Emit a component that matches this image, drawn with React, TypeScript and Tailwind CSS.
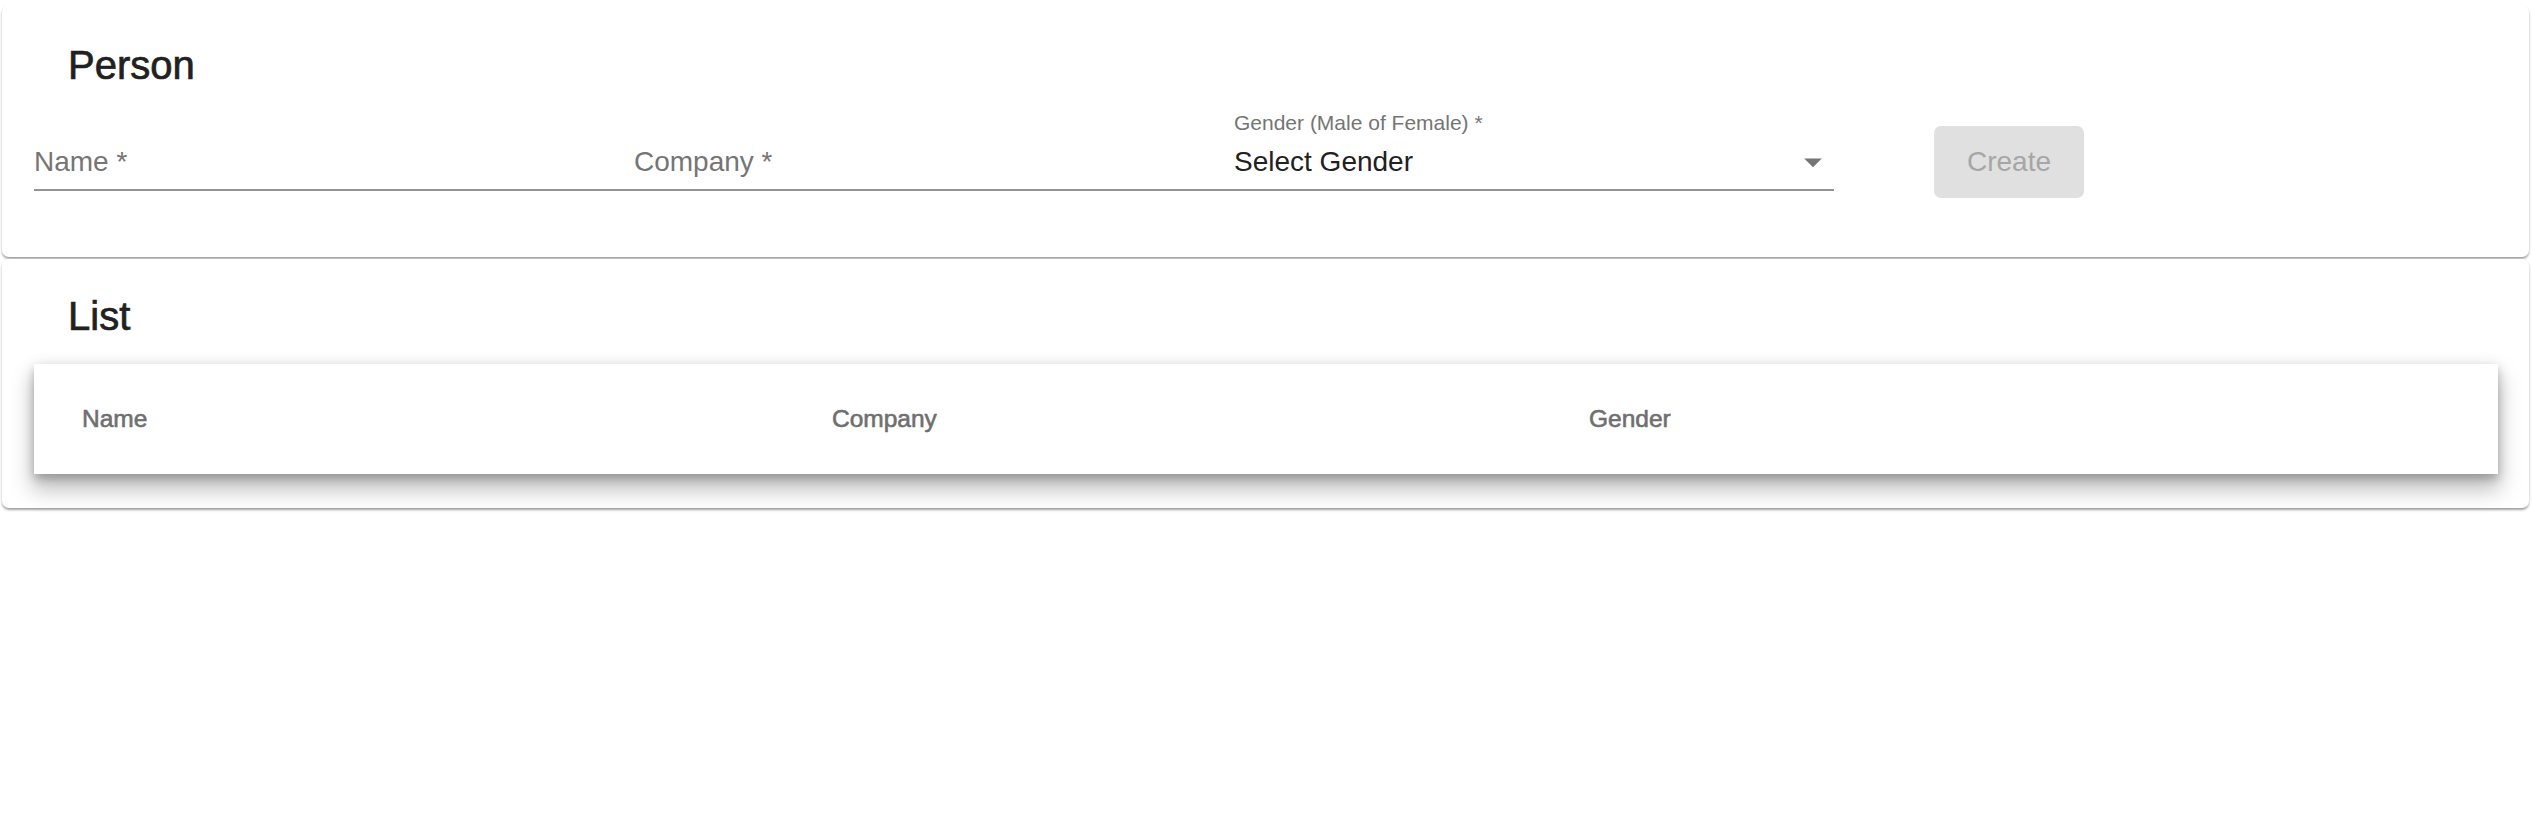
import React from 'react';

const cardShadow =
  'shadow-[0_2px_3px_0_rgba(0,0,0,0.2),0_2px_2px_0_rgba(0,0,0,0.14),0_3px_2px_-2px_rgba(0,0,0,0.12)]';

function ArrowDropDown() {
  return (
    <svg viewBox="0 0 24 24" className="w-[42px] h-[42px] fill-[#757575]">
      <path d="M7 10l5 5 5-5z" />
    </svg>
  );
}

function TextField({ label }: { label: string }) {
  return (
    <div className="w-[600px] pt-[36px]">
      <div className="h-[34px] leading-[34px] text-[28px] text-[#757575] pb-[10px] box-content border-b-2 border-[#949494]">
        {label}
      </div>
    </div>
  );
}

function GenderSelect() {
  return (
    <div className="w-[600px] pt-[3px]">
      <div className="h-[21px] leading-[21px] text-[21px] text-[#757575]">Gender (Male of Female) *</div>
      <div className="mt-[12px] flex items-center justify-between h-[34px] pb-[10px] box-content border-b-2 border-[#949494]">
        <span className="leading-[34px] text-[28px] text-[#212121]">Select Gender</span>
        <ArrowDropDown />
      </div>
    </div>
  );
}

export default function App() {
  const columns = ['Name', 'Company', 'Gender'];

  return (
    <div className="min-h-screen bg-white pt-[5px] pl-[2px] pr-[3px] [font-family:'Liberation_Sans',Arial,sans-serif]">
      {/* Person form */}
      <div className={`bg-white rounded-[7px] pl-[32px] pr-[31px] pt-[36px] pb-[59px] ${cardShadow}`}>
        <h2 className="pl-[34px] text-[40px] leading-[48px] text-[#212121] [-webkit-text-stroke:0.7px_#212121]">
          Person
        </h2>
        <div className="mt-[20px] flex items-start">
          <TextField label="Name *" />
          <TextField label="Company *" />
          <GenderSelect />
          <button
            disabled
            className="ml-[100px] mt-[17px] w-[150px] h-[72px] rounded-[7px] bg-[#e0e0e0] text-[28px] text-[#a6a6a6]"
          >
            Create
          </button>
        </div>
      </div>

      {/* List */}
      <div className={`mt-[2px] bg-white rounded-[7px] pl-[32px] pr-[31px] pt-[33px] pb-[34px] ${cardShadow}`}>
        <h2 className="pl-[34px] text-[40px] leading-[48px] text-[#212121] [-webkit-text-stroke:0.7px_#212121]">
          List
        </h2>
        <div className="mt-[24px] bg-white shadow-[0_14px_20px_2px_rgba(0,0,0,0.25),0_5px_8px_0_rgba(0,0,0,0.18),0_0_14px_0_rgba(0,0,0,0.08)]">
          <div className="h-[110px] pl-[48px] grid grid-cols-[750px_757px_1fr] items-center">
            {columns.map(col => (
              <div
                key={col}
                className="text-[24.5px] leading-[28px] text-[#6f6f6f] [-webkit-text-stroke:0.6px_#6f6f6f]"
              >
                {col}
              </div>
            ))}
          </div>
        </div>
      </div>
    </div>
  );
}
